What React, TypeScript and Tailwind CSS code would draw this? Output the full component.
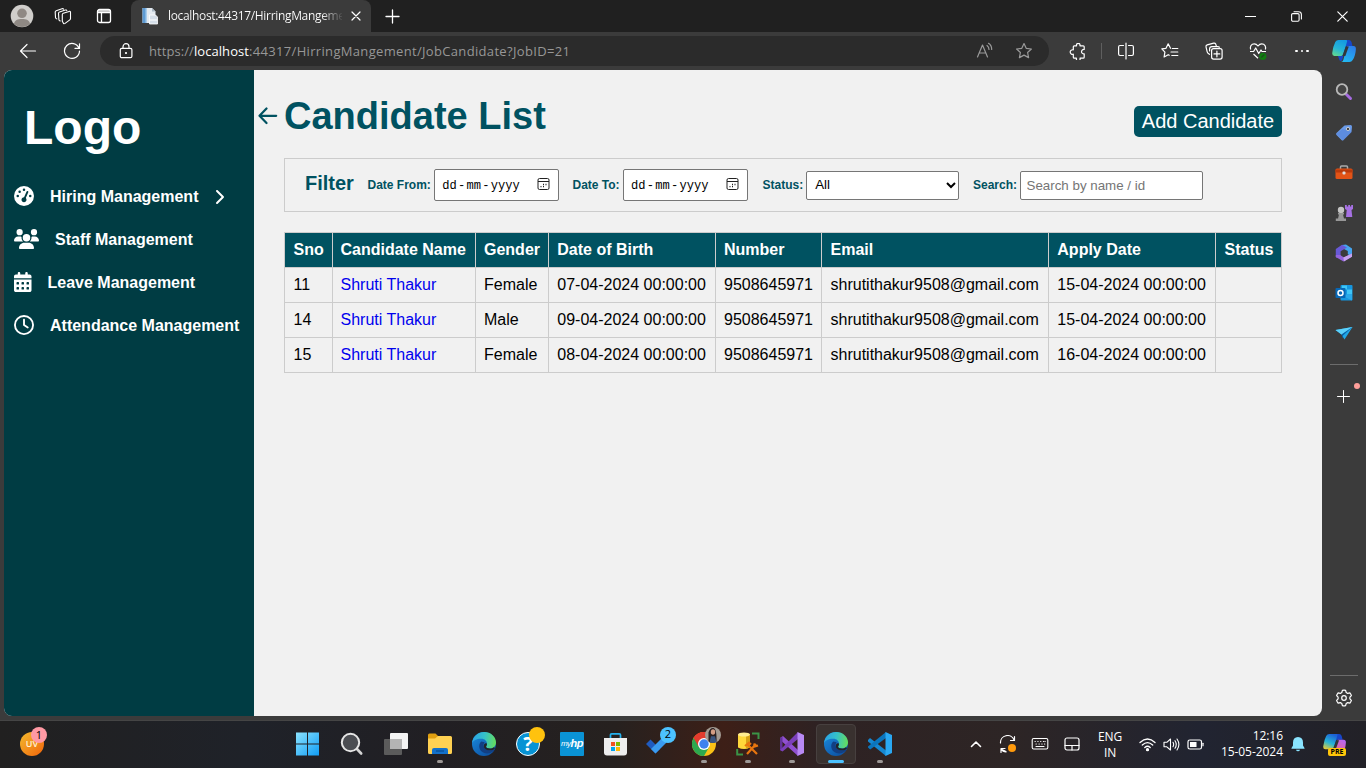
import React from "react";
import {
  FaGaugeHigh,
  FaUsers,
  FaCalendarDays,
  FaRegClock,
  FaChevronRight,
} from "react-icons/fa6";

type Kids = { children?: React.ReactNode };

function Line({ size = 18, children, color = "#fff", w = 1.2 }: Kids & { size?: number; color?: string; w?: number }) {
  return (
    <svg
      width={size}
      height={size}
      viewBox={`0 0 ${size} ${size}`}
      fill="none"
      stroke={color}
      strokeWidth={w}
      strokeLinecap="round"
      strokeLinejoin="round"
      className="block shrink-0"
    >
      {children}
    </svg>
  );
}

function Art({ size = 24, children }: Kids & { size?: number }) {
  return (
    <svg width={size} height={size} viewBox={`0 0 ${size} ${size}`} className="block shrink-0">
      {children}
    </svg>
  );
}

const STAR = "M9 1.6l2.2 4.7 5.2.7-3.8 3.5 1 5.1L9 13.1l-4.6 2.5 1-5.1L1.6 7l5.2-.7z";

function TabStrip() {
  return (
    <div className="flex h-8 items-stretch bg-[#202020]">
      <div className="flex w-[43px] items-center justify-center">
        <Art size={24}>
          <circle cx="12" cy="12" r="11.3" fill="#d0cecb" />
          <circle cx="12" cy="9.3" r="4.8" fill="#8f8984" />
          <path d="M4 19.8c.6-3.6 3.6-4.8 8-4.8s7.400 1.200 8 4.800a11.300 11.300 0 0 1-16 0z" fill="#8f8984" />
        </Art>
      </div>
      <div className="flex w-[39px] items-center justify-center">
        <Line w={1.1}>
          <path d="M8.300 7.600q0-1 1-1.300l5.800-1.900q1.400-.4 1.400 1v6.200q0 .8-.7 1.300l-4.700 3.500q-1.300.8-1.800-.4l-1-1.800z" />
          <path d="M6.200 14l-.8-.5q-.5-.4-.5-1l-.4-6.200q0-1 1-1.300l5.800-1.900q1.200-.4 1.500.5" />
          <path d="M2.800 11.900l-.8-.5q-.5-.4-.5-1l-.3-5.400q0-1 1-1.300L8 1.700q1.200-.4 1.500.5" />
        </Line>
      </div>
      <div className="flex w-[44px] items-center justify-center">
        <Line size={16} w={1.3}>
          <rect x="1.500" y="1.500" width="13" height="13" rx="2" />
          <path d="M2 3h12M2 4.600h12M5.500 5v9" />
        </Line>
      </div>
      <div className="w-[5px]" />
      <div className="flex w-[240px] items-center rounded-t-[8px] bg-[#3b3b3b]">
        <div className="ml-[10px] w-[18px]">
          <Art size={18}>
            <path d="M1.500 1h9.500l3.500 3.500V16h-13z" fill="#e4eaf0" />
            <path d="M1.500 1h4v15h-4z" fill="#5e9bd3" />
            <path d="M4.500 1h1.500v15H4.500z" fill="#a9cdec" />
            <path d="M11 1v3.500h3.500z" fill="#a9b7c4" />
            <path d="M8.500 8h6l2 2v7h-8z" fill="#d5dee8" stroke="#fff" strokeWidth=".8" />
            <path d="M9 13h7" stroke="#fff" />
          </Art>
        </div>
        <div className="ml-[9px] w-[174px] bg-linear-to-r from-white from-88% to-[#4b4b4b] bg-clip-text font-['Open_Sans',sans-serif] text-[12px] leading-4 tracking-[-0.33px] whitespace-nowrap text-transparent">
          localhost:44317/HirringMangeme
        </div>
        <div className="ml-[9px]">
          <Line size={10}>
            <path d="M1 1l8 8M9 1l-8 8" />
          </Line>
        </div>
      </div>
      <div className="flex w-[43px] items-center justify-center">
        <Line size={15} w={1.3}>
          <path d="M7.500 1v13M1 7.500h13" />
        </Line>
      </div>
      <div className="mr-px ml-auto flex">
        <div className="flex w-[46px] items-center justify-center">
          <Line size={11}>
            <path d="M.5 5.500h10" />
          </Line>
        </div>
        <div className="flex w-[46px] items-center justify-center">
          <Line size={11} w={1.1}>
            <rect x=".6" y="2.600" width="7.500" height="7.600" rx="1.200" />
            <path d="M3 .7h4.500q2.900 0 2.900 2.900V8" />
          </Line>
        </div>
        <div className="flex w-[46px] items-center justify-center">
          <Line size={11}>
            <path d="M.8.8l9.400 9.400M10.200.8L.8 10.200" />
          </Line>
        </div>
      </div>
    </div>
  );
}

function Copilot({ size, dark }: { size: number; dark?: boolean }) {
  const id = dark ? "cpd" : "cpl";
  return (
    <svg width={size} height={size} viewBox="0 0 24 24" className="block shrink-0">
      <defs>
        <linearGradient id={id + "a"} x1="0.600" y1="0" x2="0.200" y2="1">
          <stop offset="0" stopColor={dark ? "#1c62d8" : "#159be0"} />
          <stop offset=".55" stopColor="#27b5d6" />
          <stop offset="1" stopColor={dark ? "#e6cc38" : "#62d98f"} />
        </linearGradient>
        <linearGradient id={id + "b"} x1="0.800" y1="0" x2="0.300" y2="1">
          <stop offset="0" stopColor={dark ? "#b565f3" : "#2c7ce9"} />
          <stop offset="1" stopColor={dark ? "#fa6b77" : "#22b9f2"} />
        </linearGradient>
      </defs>
      <path d="M13 1h4q1.800 0 2.500 2l1 4h-5q-1.500 0-2 1.500L10.500 20q-.9 3-3 1.300L6 17z" fill="#1746c9" />
      <path d="M6.500 1H14q1.500 0 1 1.700L11.300 15q-.7 2-2.300 2H2.400Q-.2 17 .3 13.500 1.200 7 3.300 3 4.400 1 6.500 1z" fill={`url(#${id}a)`} />
      <path d="M15.500 7h6q2.500 0 2.400 3-.4 7-3.200 11-1.200 2-3.200 2H9q1.700-.2 2.300-2l3-11q.5-2 1.200-3z" fill={`url(#${id}b)`} />
      <path d="M13.800 7.500h3L13.300 17h-3z" fill="#333638" />
    </svg>
  );
}

function AddressBar() {
  return (
    <div className="flex h-[38px] items-center bg-[#3b3b3b]">
      <div className="flex w-[56px] justify-center">
        <Line>
          <path d="M16.500 9h-15M8 2.500L1.500 9 8 15.500" />
        </Line>
      </div>
      <div className="flex w-[32px] justify-center">
        <Line>
          <path d="M16 6.200A7.500 7.500 0 1 0 16.500 9M16.500 1.800V6.400H12" />
        </Line>
      </div>
      <div className="ml-[12px] flex h-[30px] w-[949px] items-center rounded-full bg-[#2b2b2b]">
        <div className="ml-[18px]">
          <Line size={16}>
            <rect x="2.300" y="5.300" width="11.600" height="9.400" rx="1.500" />
            <path d="M5 5V3.700a3 3 0 0 1 6 0V5" />
            <circle cx="8" cy="10" r=".5" fill="#fff" />
          </Line>
        </div>
        <div className="ml-[15px] font-['Open_Sans',sans-serif] text-[13px] leading-5 tracking-[0.330px] whitespace-nowrap text-[#979797]">
          <span className="tracking-[0.070px]">
            https://<span className="text-white">localhost</span>
          </span>
          :44317/HirringMangement/JobCandidate?JobID=21
        </div>
        <div className="mr-[16px] ml-auto flex items-center gap-[21px]">
          <Line color="#9a9a9a" size={18}>
            <path d="M1.500 15L6.500 3l5 12M3.200 11h6.600M11 3.500q2 1.500 2 4M12.500 1.300q3.300 2.200 3.200 6.200" />
          </Line>
          <Line color="#9a9a9a">
            <path d={STAR} />
          </Line>
        </div>
      </div>
      <div className="ml-[20px]">
        <Line size={17}>
          <path d="M5.300 2.800h2.300a1.800 1.800 0 1 1 3.300 0h3.300q1 0 1 1v2.700a2.200 2.200 0 1 0 0 4.300v3.400q0 1-1 1H11a1.900 1.900 0 1 1-3.500 0H5.300q-1 0-1-1v-3a2.300 2.300 0 1 1 0-4.300V3.800q0-1 1-1z" />
        </Line>
      </div>
      <div className="ml-[15px] h-4 w-px bg-[#5f5f5f]" />
      <div className="flex w-[46px] justify-center pl-px">
        <Line>
          <path d="M9 1v16M6.500 3.500H3q-1.400 0-1.400 1.400v7.200q0 1.400 1.400 1.400h3.500M11.500 3.500H15q1.400 0 1.400 1.400v7.200q0 1.400-1.400 1.400h-3.500" />
        </Line>
      </div>
      <div className="flex w-[44px] justify-center">
        <Line>
          <path d="M9.500 6.300L7.200 1.800 5 6.300l-4.200.5 3.100 3.300-.8 4.900 4.100-2.300 1 .6M11.300 6.500h5.500M10 10h6.800M10.800 13.500h6" />
        </Line>
      </div>
      <div className="flex w-[44px] justify-center">
        <Line>
          <rect x="6.600" y="6.600" width="10.500" height="10.500" rx="2" />
          <path d="M11.900 9v5.800M9 11.900h5.800M4.500 12.300L3.300 11.500q-.9-.6-1.100-1.600L1 4.800q-.3-1.500 1.200-1.900l6.500-1.800q1.400-.3 2 1l.7 2M4.600 9V6.800q0-2.200 2.200-2.200h5.900q1 0 1.800.6" />
        </Line>
      </div>
      <div className="flex w-[44px] justify-center">
        <svg width="18" height="18" viewBox="0 0 18 18" fill="none" stroke="#fff" strokeWidth="1.200" strokeLinejoin="round">
          <path d="M1.700 7.500Q.6 4 3.300 2.300 6.500.8 9 4q2.500-3.200 5.700-1.700Q17.400 4 16.300 7.500M1 9.500h3.600L6.700 6l3 5.500L12 8l1 1.500h4M4.500 12L9 16.300" />
          <circle cx="13.800" cy="14.300" r="3.600" fill="#107c10" stroke="none" />
          <path d="M12.300 15.500l3-3" stroke="#1c4e1c" />
        </svg>
      </div>
      <div className="flex w-[44px] justify-center gap-[3px]">
        <span className="size-[2.500px] rounded-full bg-white" />
        <span className="size-[2.500px] rounded-full bg-white" />
        <span className="size-[2.500px] rounded-full bg-white" />
      </div>
      <div className="mr-[10px] ml-auto">
        <Copilot size={24} />
      </div>
    </div>
  );
}

const navItems = [
  { label: "Hiring Management", Icon: FaGaugeHigh, width: "w-[20px]", more: true },
  { label: "Staff Management", Icon: FaUsers, width: "w-[25px]", more: false },
  { label: "Leave Management", Icon: FaCalendarDays, width: "w-[17.5px]", more: false },
  { label: "Attendance Management", Icon: FaRegClock, width: "w-[20px]", more: false },
];

function SideNav() {
  return (
    <nav className="w-[250px] shrink-0 bg-[#003c43] text-white">
      <div className="mt-[30px] ml-[20px] text-[48px] leading-[56px] font-bold">Logo</div>
      <ul className="mt-[18px]">
        {navItems.map(({ label, Icon, width, more }) => (
          <li key={label} className="flex h-[43px] items-center gap-4 pl-[10px] text-[16px] font-bold whitespace-nowrap">
            <Icon className={`h-[20px] shrink-0 ${width}`} />
            <span className="pt-[3px]">{label}</span>
            {more && <FaChevronRight className="mt-[3px] ml-[-3px] text-[16px]" />}
          </li>
        ))}
      </ul>
    </nav>
  );
}

function DateField({ label, className }: { label: string; className: string }) {
  return (
    <label className={className}>
      <span className="mr-[3.500px] text-[12px] font-bold text-[#005261]">{label}</span>
      <span className="flex h-[32px] w-[125px] shrink-0 items-center rounded-[2px] border border-[#767676] bg-white pl-[7px] font-['Liberation_Mono',monospace] text-[12.100px] text-black">
        <span className="pt-[3px]">dd</span>
        <span className="px-[1.200px] pt-[3px]">-</span>
        <span className="pt-[3px]">mm</span>
        <span className="px-[1.200px] pt-[3px]">-</span>
        <span className="pt-[3px]">yyyy</span>
        <svg width="13" height="13" viewBox="0 0 13 13" className="mt-[-1px] mr-[8px] ml-auto" fill="none" stroke="#222">
          <rect x="1" y=".5" width="11" height="11" rx="1.500" />
          <path d="M1 3.500h11" />
          <path d="M6 6.500h1M8.500 6.500h1M3.500 8.700h1M6 8.700h1" strokeWidth="1.300" />
        </svg>
      </span>
    </label>
  );
}

function FilterBar() {
  return (
    <section className="mt-[21px] flex h-[54px] w-[998px] items-center border border-[#ccc] whitespace-nowrap">
      <h2 className="mb-[5px] ml-[20px] w-[62.500px] text-[20px] font-bold text-[#005261]">Filter</h2>
      <DateField label="Date From:" className="flex w-[205px] items-center" />
      <DateField label="Date To:" className="flex w-[190px] items-center" />
      <div className="flex w-[210.500px] items-center">
        <span className="mr-[3px] text-[12px] font-bold text-[#005261]">Status:</span>
        <button className="flex h-[29px] w-[153px] items-center justify-between rounded-[2px] border border-[#767676] bg-white pr-[2px] pl-[8px] text-[13.330px] text-black">
          All
          <svg width="10" height="8" viewBox="0 0 10 8" fill="none" stroke="#000" strokeWidth="2">
            <path d="M1 2l4 4 4-4" />
          </svg>
        </button>
      </div>
      <label className="flex items-center">
        <span className="mr-[2.500px] text-[12px] font-bold text-[#005261]">Search:</span>
        <input
          placeholder="Search by name / id"
          className="h-[29px] w-[183px] rounded-[2px] border border-[#767676] bg-white px-[6px] text-[13.330px] placeholder:text-[#757575]"
        />
      </label>
    </section>
  );
}

const columns = ["Sno", "Candidate Name", "Gender", "Date of Birth", "Number", "Email", "Apply Date", "Status"];
const rows = [
  ["11", "Shruti Thakur", "Female", "07-04-2024 00:00:00", "9508645971", "shrutithakur9508@gmail.com", "15-04-2024 00:00:00", ""],
  ["14", "Shruti Thakur", "Male", "09-04-2024 00:00:00", "9508645971", "shrutithakur9508@gmail.com", "15-04-2024 00:00:00", ""],
  ["15", "Shruti Thakur", "Female", "08-04-2024 00:00:00", "9508645971", "shrutithakur9508@gmail.com", "16-04-2024 00:00:00", ""],
];
const inset = ["pl-[8.6px]", "pl-[7.5px]", "pl-[8px]", "pl-[8.3px]", "pl-[8px]", "pl-[8.5px]", "pl-[8.3px]", "pl-[8.5px]"];

function CandidateTable() {
  return (
    <table className="mt-[20px] w-[998px] table-fixed border-collapse text-[16px] leading-[18px] whitespace-nowrap text-black">
      <colgroup>
        <col className="w-[48px]" />
        <col className="w-[143px]" />
        <col className="w-[73px]" />
        <col className="w-[167px]" />
        <col className="w-[106px]" />
        <col className="w-[227px]" />
        <col className="w-[167px]" />
        <col className="w-[66px]" />
      </colgroup>
      <thead>
        <tr className="h-[35px] bg-[#005261] text-left text-white">
          {columns.map((c, i) => (
            <th key={c} className={`border border-[#ccc] py-0 font-bold ${inset[i]}`}>
              {c}
            </th>
          ))}
        </tr>
      </thead>
      <tbody>
        {rows.map((r) => (
          <tr key={r[0]} className="h-[35px]">
            {r.map((v, i) => (
              <td key={i} className={`border border-[#ccc] py-0 ${inset[i]}`}>
                {i === 1 ? <a className="text-[#0000ee]">{v}</a> : v}
              </td>
            ))}
          </tr>
        ))}
      </tbody>
    </table>
  );
}

function Page() {
  return (
    <div className="flex w-[1318px] overflow-hidden rounded-[8px] bg-[#f1f1f1]">
      <SideNav />
      <main className="flex flex-1">
        <svg
          width="20"
          height="20"
          viewBox="0 0 20 20"
          className="mt-[36px] ml-[4px] shrink-0"
          fill="none"
          stroke="#005261"
          strokeWidth="2.200"
          strokeLinecap="round"
          strokeLinejoin="round"
        >
          <path d="M18.200 9.800H1.500M8.500 2.500L1.500 9.800l7 7.200" />
        </svg>
        <div className="ml-[6px] w-[998px]">
          <header className="flex h-[67px] items-start justify-between">
            <h1 className="mt-[24px] text-[38px] leading-[44px] font-bold whitespace-nowrap text-[#005261]">Candidate List</h1>
            <button className="mt-[36px] h-[31px] w-[148px] rounded-[5px] bg-[#005261] pb-[2px] text-[20px] leading-[28px] whitespace-nowrap text-white">
              Add Candidate
            </button>
          </header>
          <FilterBar />
          <CandidateTable />
        </div>
      </main>
    </div>
  );
}

function EdgeRail() {
  return (
    <aside className="flex w-[44px] flex-col items-center">
      <div className="mt-[2px] flex h-[41px] items-center pb-px">
        <Art size={18}>
          <path d="M11.500 11.500l4 4" stroke="#a56be0" strokeWidth="3" strokeLinecap="round" />
          <circle cx="7" cy="6.500" r="5.300" fill="#444" stroke="#b8b8b8" strokeWidth="1.800" />
        </Art>
      </div>
      <div className="flex h-10 items-center">
        <Art size={18}>
          <path d="M9.500 1.500L15.500 1q1.500 0 1.500 1.500l-.5 5.500-8 8q-1 1-2 0l-5-5q-1-1 0-2z" fill="#6b9be8" />
          <path d="M1.500 10l6.500 6.500 8.500-8.500-9-3z" fill="#4f7ed6" opacity=".5" />
          <circle cx="13" cy="5" r="1.600" fill="#333" stroke="#ddd" strokeWidth=".8" />
        </Art>
      </div>
      <div className="flex h-10 items-center">
        <Art size={18}>
          <path d="M5.500 5V3q0-1 1-1h5q1 0 1 1v2" fill="none" stroke="#aaa" strokeWidth="1.500" />
          <rect x=".5" y="4.500" width="17" height="10.500" rx="1.500" fill="#e25316" />
          <path d="M.5 5.500h17v3H.5z" fill="#b83a0c" />
          <rect x="7.500" y="7.500" width="3" height="3" rx="1" fill="#ddd" />
        </Art>
      </div>
      <div className="flex h-10 items-center">
        <Art size={18}>
          <path d="M10 1h1.800v1.500h1.400V1h1.800v1.500h1.200V1H18v4l-1.500 1 .8 7H11l.7-7L10 5z" fill="#a671e3" />
          <circle cx="6" cy="6" r="3.200" fill="#c4c4c4" />
          <path d="M3 9h6v1.500H8l1 4h2V17H.8v-2.500H3l1-4H3z" fill="#979797" />
        </Art>
      </div>
      <div className="flex h-10 items-center">
        <Art size={18}>
          <path d="M7 1l4-.5 6 4v8l-4.200-2.300V7L7 4z" fill="#45a5ef" />
          <path d="M7 .8l5 2.700-6.400 3.800v5L2 14l-1.200-1V5z" fill="#6859d6" />
          <path d="M.8 11v2l7.700 4.500L17 12.500V9.500L9 13.500 5.200 11z" fill="#9363dc" />
          <path d="M9 17.500L17 12.800V9.500L8.300 13.500z" fill="#c6a2f0" />
        </Art>
      </div>
      <div className="flex h-10 items-center">
        <Art size={18}>
          <rect x="5.500" y="1" width="12" height="15.500" rx="1" fill="#1596df" />
          <path d="M7 1.500h5v4H7zM12 5.500h5v5h-5z" fill="#50d9ff" opacity=".7" />
          <path d="M6 11l11 5.500V10z" fill="#28a8ea" />
          <rect x=".5" y="4" width="10" height="10" rx="1" fill="#0767b5" />
          <circle cx="5.500" cy="9" r="2.500" fill="none" stroke="#fff" strokeWidth="1.500" />
        </Art>
      </div>
      <div className="flex h-10 items-center">
        <Art size={18}>
          <path d="M.5 6L17.500 3l-8 12.500-3-5z" fill="#20a8e8" />
          <path d="M.5 6L17.500 3l-11 7.500z" fill="#5bd0fa" />
          <path d="M6.500 10.500L17.500 3 8 11.500v3.300z" fill="#0b62a8" />
        </Art>
      </div>
      <div className="mt-[11px] h-px w-[28px] bg-[#6c6c6c]" />
      <div className="relative mt-[25px] mr-[2px]">
        <Line size={13} w={1}>
          <path d="M6.500.5v12M.5 6.500h12" />
        </Line>
        <span className="absolute -top-[7px] left-[17px] size-[6px] rounded-full bg-[#ff9f9a]" />
      </div>
      <div className="mt-auto h-px w-[28px] bg-[#6c6c6c]" />
      <div className="mt-[13px] mb-[9px]">
        <Line>
          <path d="M7.400 1.400q1.600-.4 3.200 0l.6 2.100 1.500.9 2.200-.5q1.100 1.200 1.500 2.700L14.900 8.200v1.700l1.500 1.500q-.4 1.500-1.500 2.700l-2.200-.5-1.500.9-.6 2.100q-1.600.4-3.200 0l-.6-2.100-1.500-.9-2.200.5Q2 12.900 1.600 11.400l1.500-1.500V8.200L1.600 6.600Q2 5.100 3.100 3.900l2.200.5 1.500-.9z" />
          <circle cx="9" cy="9" r="2.300" />
        </Line>
      </div>
    </aside>
  );
}

function EdgeLogo({ id }: { id: string }) {
  return (
    <svg width="24" height="24" viewBox="0 0 24 24">
      <defs>
        <linearGradient id={id + "t"} x1="0" y1="0.400" x2="1" y2="0.500">
          <stop offset="0" stopColor="#2aa3e6" />
          <stop offset=".5" stopColor="#35c1c9" />
          <stop offset="1" stopColor="#65dd5c" />
        </linearGradient>
        <linearGradient id={id + "b"} x1="0" y1="0" x2="0.800" y2="1">
          <stop offset="0" stopColor="#1b8ee0" />
          <stop offset="1" stopColor="#0c4fa0" />
        </linearGradient>
      </defs>
      <circle cx="12" cy="12" r="12" fill={`url(#${id}b)`} />
      <path d="M0 11.500C.5 4.500 6 0 12.200 0 19 0 24 5 24 10.500c0 3.700-2.800 6-6 6-2.500 0-4-.9-4-1.700 0-.6 1-1.200 1-3.100C15 9 12.500 6.700 9.500 6.700 5 6.500.8 8.500 0 11.500z" fill={`url(#${id}t)`} />
      <path d="M9.300 9.500c-3 2.500-2.600 7.300.4 10 3.300 2.800 8.300 2.600 12.200-.8.800-.8.300-1.400-.5-1-3.400 1.400-7.800.5-9.300-2.300-1-1.800-.7-3.600.6-5.100z" fill="#123f83" />
      <path d="M15 11.700c0 1.900-1 2.500-1 3.100 0 .8 1.500 1.700 4 1.700 1.500 0 2.900-.5 4-1.300l1 1.300-1.700 1.200c-3.400 1.400-7.800.5-9.300-2.300-.8-2 .3-5.500 3-3.700z" fill="#222428" />
    </svg>
  );
}

function TaskItem({ children, state }: Kids & { state?: "run" | "active" }) {
  return (
    <div
      className={
        state === "active"
          ? "relative mx-[2px] flex h-[40px] w-[40px] items-center justify-center rounded-[4px] border border-[#47403f] bg-[#39312f] pb-px"
          : "relative flex h-[40px] w-[44px] items-center justify-center pb-px"
      }
    >
      {children}
      {state === "run" && <span className="absolute bottom-[1px] left-[19px] h-[3px] w-[6px] rounded-full bg-[#9d9896]" />}
      {state === "active" && <span className="absolute bottom-0 left-[11px] h-[3px] w-[16px] rounded-full bg-[#4cc2ff]" />}
    </div>
  );
}

function Taskbar() {
  return (
    <footer className="flex h-[48px] items-center border-t border-[#454545] bg-[linear-gradient(90deg,#212020_0%,#1f2229_18%,#211f23_32%,#26211f_45%,#3d1f17_53%,#2e2223_60%,#2d2525_74%,#212431_88%,#222127_100%)] pb-px font-['Open_Sans',sans-serif]">
      <div className="relative ml-[20px] w-[266px]">
        <div className="flex size-[24px] items-center justify-center rounded-full bg-linear-to-br from-[#f1b92d] to-[#ef6208] text-[9px] font-semibold text-[#fff3d5]">UV</div>
        <span className="absolute -top-[5px] left-[11px] flex size-[16px] items-center justify-center rounded-full bg-[#ff99a4] text-[11px] text-black">1</span>
      </div>
      <TaskItem>
        <svg width="24" height="24" viewBox="0 0 24 24">
          <defs>
            <linearGradient id="win" x1="0" y1="0" x2="1" y2="1">
              <stop offset="0" stopColor="#8be3ff" />
              <stop offset="1" stopColor="#109df5" />
            </linearGradient>
          </defs>
          <path d="M0 .500h11v11H0zM12 .500h11v11H12zM0 12.500h11v11H0zM12 12.500h11v11H12z" fill="url(#win)" />
        </svg>
      </TaskItem>
      <TaskItem>
        <Art>
          <path d="M17 17l4.200 4.500" stroke="#d4d4d4" strokeWidth="2.600" strokeLinecap="round" />
          <circle cx="10.500" cy="10.500" r="8.700" fill="#4b4d52" stroke="#e5e5e5" strokeWidth="2" />
        </Art>
      </TaskItem>
      <TaskItem>
        <Art>
          <rect x="6" y="1" width="18" height="16" rx="1" fill="#f3f3f3" />
          <rect x="0" y="7" width="18" height="16" rx="1" fill="#5b5b5b" />
          <path d="M6 7h12v10H6z" fill="#b4b4b4" />
        </Art>
      </TaskItem>
      <TaskItem state="run">
        <Art>
          <path d="M0 3q0-1.500 1.500-1.500h6L10 4v4H0z" fill="#e09f10" />
          <path d="M0 6.500h7L10 4h12.500Q24 4 24 5.500v15Q24 22 22.500 22h-21Q0 22 0 20.500z" fill="#ffd152" />
          <path d="M4 22v-4q0-2 2-2h12q2 0 2 2v4z" fill="#1371ca" />
          <path d="M8 19h8" stroke="#074b91" strokeWidth="1.200" />
        </Art>
      </TaskItem>
      <TaskItem>
        <EdgeLogo id="e1" />
      </TaskItem>
      <TaskItem>
        <div className="relative flex size-[24px] items-center justify-center rounded-full border-[1.500px] border-white bg-[#0793d4] text-[20px] leading-none font-bold text-white">
          ?
          <span className="absolute -top-[6px] left-[12px] size-[16px] rounded-full bg-[#ffc20e]" />
        </div>
      </TaskItem>
      <TaskItem>
        <div className="flex size-[24px] items-center justify-center rounded-[1px] bg-[#0a93d5] font-['Liberation_Sans',sans-serif] text-[8px] tracking-[-0.500px] text-white italic">
          my<b className="text-[11px]">hp</b>
        </div>
      </TaskItem>
      <TaskItem>
        <Art>
          <path d="M6.500 7V3q0-1.200 1.200-1.200h7.600q1.200 0 1.200 1.200v4" fill="none" stroke="#25b2ee" strokeWidth="1.700" />
          <path d="M0 6h23v14.500q0 3-3 3H3q-3 0-3-3z" fill="#eee" />
          <path d="M7 10h4v4H7z" fill="#f25022" />
          <path d="M12 10h4v4h-4z" fill="#7fba00" />
          <path d="M7 15h4v4H7z" fill="#00a4ef" />
          <path d="M12 15h4v4h-4z" fill="#ffb900" />
        </Art>
      </TaskItem>
      <TaskItem>
        <div className="relative">
          <svg width="28" height="24" viewBox="0 0 28 24">
            <path d="M0 12l4.500-4.500L14 17l-4.500 4.500z" fill="#1f5bc0" />
            <path d="M9.500 21.500L5 17 20 2l4.500 4.500z" fill="#3a9bf0" />
          </svg>
          <span className="absolute -top-[5px] left-[14px] flex size-[16px] items-center justify-center rounded-full bg-[#4cc2ff] text-[11px] text-black">2</span>
        </div>
      </TaskItem>
      <TaskItem state="run">
        <div className="relative">
          <Art>
            <circle cx="12" cy="12" r="12" fill="#fbc116" />
            <path d="M12 12L1.600 6A12 12 0 0 1 22.400 6z" fill="#e33b2e" />
            <path d="M1.600 6A12 12 0 0 0 12 24l5.200-9L12 12z" fill="#2da94f" />
            <path d="M12 6h10.400A12 12 0 0 0 1.600 6l5.200 9z" fill="#e33b2e" />
            <circle cx="12" cy="12" r="6" fill="#fff" />
            <circle cx="12" cy="12" r="4.700" fill="#3f82ee" />
          </Art>
          <svg width="16" height="16" viewBox="0 0 16 16" className="absolute -top-[5px] left-[13px]">
            <circle cx="8" cy="8" r="8" fill="#a39a92" />
            <path d="M3.500 14.500V5.500q1.500-5 5-4.500 3.500 1 3 13.500Q7 17 3.500 14.500z" fill="#2a2022" />
            <ellipse cx="8" cy="5" rx="2.200" ry="2.800" fill="#d39d84" />
            <path d="M4.500 15.200l1.500-6h4l1.500 6q-3.500 1.500-7 0z" fill="#3a5681" />
          </svg>
        </div>
      </TaskItem>
      <TaskItem state="run">
        <Art>
          <path d="M16 1.500h6.500V7M7 22.500H1.200V17" fill="none" stroke="#3b9447" strokeWidth="2" />
          <path d="M2 2.500v13q6 3 12 0v-13z" fill="#ffd83b" />
          <path d="M10 3v13.500l4-1v-13z" fill="#d8a216" />
          <ellipse cx="8" cy="2.500" rx="6" ry="2" fill="#ffec91" />
          <path d="M11 12l10 10M20 12L11 22" stroke="#e8750f" strokeWidth="2.200" />
          <path d="M9 14l4-3.500 2 2M18 11.500l1 3 3-1" fill="none" stroke="#e8750f" strokeWidth="2" />
        </Art>
      </TaskItem>
      <TaskItem state="run">
        <Art>
          <path d="M0 6l3-2 15 14v6L2 9.500v7L0 18z" fill="#9050d0" />
          <path d="M0 6l2.500-1.300V19L0 18z" fill="#63329a" />
          <path d="M2.500 19.500L0 18l18-18v7z" fill="#7b3fb9" />
          <path d="M17.500 0L24 3v18l-6.500 3z" fill="#b889f4" />
        </Art>
      </TaskItem>
      <TaskItem state="active">
        <EdgeLogo id="e2" />
      </TaskItem>
      <TaskItem state="run">
        <Art>
          <path d="M0 8l2-2 16 12.500V24L0 9.500z" fill="#1687d0" />
          <path d="M0 15.500l2.200 2L18 6V0L0 14.500z" fill="#0b75bd" />
          <path d="M17.500 0L24 3v18l-6.500 3z" fill="#2aa8f2" />
        </Art>
      </TaskItem>
      <div className="ml-auto flex items-center text-[12px] leading-4 text-white">
        <div className="flex w-[32px] justify-center">
          <Line size={12} w={1.6}>
            <path d="M1.500 8.500L6 4l4.500 4.500" />
          </Line>
        </div>
        <div className="flex w-[32px] justify-center">
          <Line>
            <path d="M1.500 8A7 7 0 0 1 15 5M15.500 1.500V5.500H11.500M7 16.500L2 14v3.500M2 13.500h4M2 14q2 3 5 3" />
            <circle cx="13" cy="13" r="4" fill="#ff9a0c" stroke="none" />
          </Line>
        </div>
        <div className="flex w-[32px] justify-center">
          <Line w={1.1}>
            <rect x="1.200" y="3.500" width="15.600" height="10.500" rx="1.500" />
            <path d="M4 6.500h.3M6.800 6.500h.3M9.600 6.500h.3M12.400 6.500h.3M14 6.500h.2M5 9h.3M8 9h.3M10.800 9h.3M13.500 9h.3M5 11.500h8" />
          </Line>
        </div>
        <div className="flex w-[31px] justify-center">
          <Line size={16}>
            <rect x="1" y="2" width="14" height="12" rx="2" />
            <path d="M1 9.500h14M8 9.500V14" />
          </Line>
        </div>
        <div className="w-[46px] pt-px text-center tracking-[-0.100px]">
          <div>ENG</div>
          <div>IN</div>
        </div>
        <div className="ml-[6px] flex items-center gap-[7px]">
          <Line size={17} w={1.3}>
            <path d="M1 6.500q7.500-7 15 0M3.300 9q5.200-4.800 10.400 0M5.800 11.500q2.700-2.400 5.400 0" />
            <circle cx="8.500" cy="13.700" r="1" fill="#fff" />
          </Line>
          <Line size={17} w={1.1}>
            <path d="M1 6.300h2.800L7.500 3v11L3.800 10.800H1zM10 6.300q1.300 2.200 0 4.400M12 4.700q2.500 3.800 0 7.600M14 3q3.800 5.500 0 11" />
          </Line>
          <Line size={17} w={1.2}>
            <rect x="1" y="4" width="13.500" height="9" rx="1.800" />
            <path d="M16 7.300v2.400" />
            <rect x="3" y="6" width="6.500" height="5" fill="#fff" stroke="none" />
          </Line>
        </div>
        <div className="w-[79px] text-right tracking-[-0.050px]">
          <div>12:16</div>
          <div>15-05-2024</div>
        </div>
        <div className="ml-[7px]">
          <Art size={16}>
            <path d="M8 1q5 .2 5 5.500v3l1.500 2.500v.7h-13V12L3 9.500v-3Q3 1.200 8 1zM6 13.700h4q-.4 1.600-2 1.600t-2-1.600z" fill="#8ae4ff" />
          </Art>
        </div>
        <div className="relative mr-[20px] ml-[17px]">
          <Copilot size={23} dark />
          <span className="absolute top-[15px] left-[5px] flex h-[8px] w-[18px] items-center justify-center rounded-[2px] bg-[#ffc60a] text-[7px] leading-none font-bold text-black">PRE</span>
        </div>
      </div>
    </footer>
  );
}

export default function App() {
  return (
    <div className="flex h-[768px] w-[1366px] flex-col overflow-hidden bg-[#3b3b3b] font-['Liberation_Sans',Arial,sans-serif]">
      <TabStrip />
      <AddressBar />
      <div className="mb-[4px] flex flex-1 pl-[4px]">
        <Page />
        <EdgeRail />
      </div>
      <Taskbar />
    </div>
  );
}
